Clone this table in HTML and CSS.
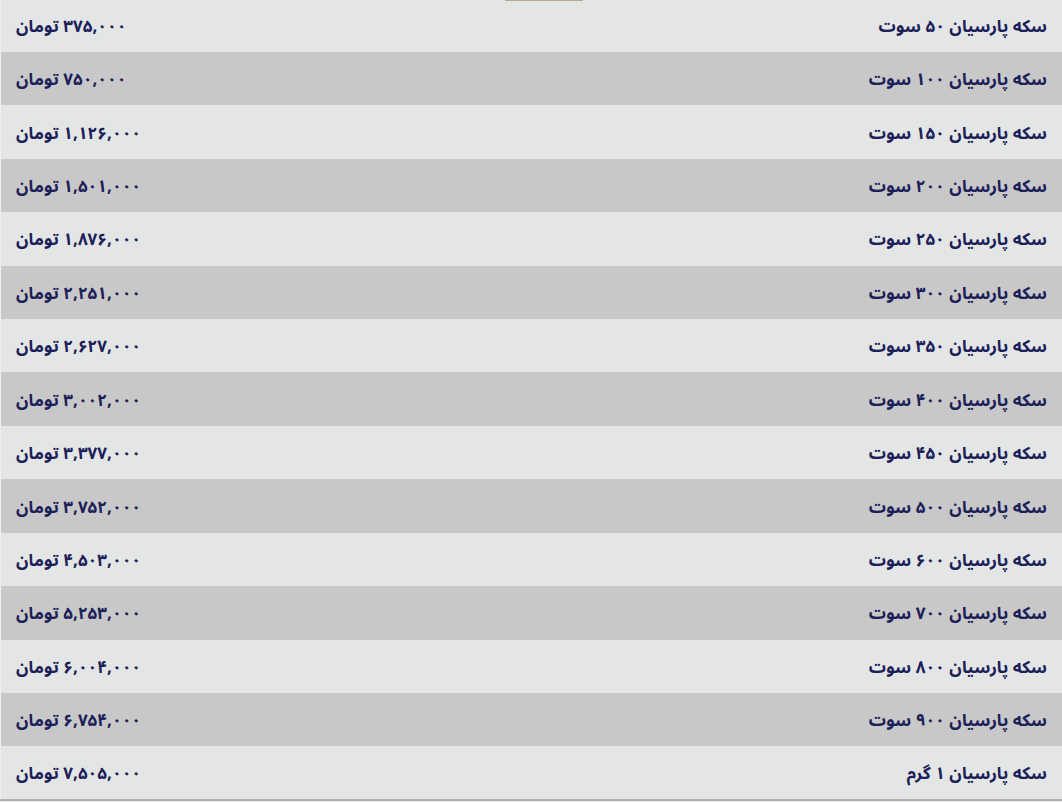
FILE: index.html
```html
<!DOCTYPE html>
<html lang="fa" dir="rtl">
<head>
<meta charset="utf-8">
<link rel="stylesheet" href="styles.css">
</head>
<body>
<div class="page">
  <div class="topline"></div>
  <table class="prices">
    <tbody>
      <tr><td class="name">سکه پارسیان ۵۰ سوت</td><td class="price">۳۷۵,۰۰۰ تومان</td></tr>
      <tr><td class="name">سکه پارسیان ۱۰۰ سوت</td><td class="price">۷۵۰,۰۰۰ تومان</td></tr>
      <tr><td class="name">سکه پارسیان ۱۵۰ سوت</td><td class="price">۱,۱۲۶,۰۰۰ تومان</td></tr>
      <tr><td class="name">سکه پارسیان ۲۰۰ سوت</td><td class="price">۱,۵۰۱,۰۰۰ تومان</td></tr>
      <tr><td class="name">سکه پارسیان ۲۵۰ سوت</td><td class="price">۱,۸۷۶,۰۰۰ تومان</td></tr>
      <tr><td class="name">سکه پارسیان ۳۰۰ سوت</td><td class="price">۲,۲۵۱,۰۰۰ تومان</td></tr>
      <tr><td class="name">سکه پارسیان ۳۵۰ سوت</td><td class="price">۲,۶۲۷,۰۰۰ تومان</td></tr>
      <tr><td class="name">سکه پارسیان ۴۰۰ سوت</td><td class="price">۳,۰۰۲,۰۰۰ تومان</td></tr>
      <tr><td class="name">سکه پارسیان ۴۵۰ سوت</td><td class="price">۳,۳۷۷,۰۰۰ تومان</td></tr>
      <tr><td class="name">سکه پارسیان ۵۰۰ سوت</td><td class="price">۳,۷۵۲,۰۰۰ تومان</td></tr>
      <tr><td class="name">سکه پارسیان ۶۰۰ سوت</td><td class="price">۴,۵۰۳,۰۰۰ تومان</td></tr>
      <tr><td class="name">سکه پارسیان ۷۰۰ سوت</td><td class="price">۵,۲۵۳,۰۰۰ تومان</td></tr>
      <tr><td class="name">سکه پارسیان ۸۰۰ سوت</td><td class="price">۶,۰۰۴,۰۰۰ تومان</td></tr>
      <tr><td class="name">سکه پارسیان ۹۰۰ سوت</td><td class="price">۶,۷۵۴,۰۰۰ تومان</td></tr>
      <tr><td class="name">سکه پارسیان ۱ گرم</td><td class="price">۷,۵۰۵,۰۰۰ تومان</td></tr>
    </tbody>
  </table>
</div>
</body>
</html>
```

FILE: styles.css
```css
html, body {
  margin: 0;
  padding: 0;
  background: #e4e6e6;
  overflow: hidden;
}
.page {
  position: relative;
  width: 1062px;
  height: 802px;
  overflow: hidden;
}
.topline {
  position: absolute;
  top: 0;
  left: 505px;
  width: 78px;
  height: 1px;
  background: #b7a98a;
}
.prices {
  width: 1062px;
  border-collapse: collapse;
  margin-top: -1.5px;
  font-family: "Noto Sans Arabic", "Vazirmatn", "Noto Naskh Arabic", "DejaVu Sans", sans-serif;
  font-weight: 700;
  font-size: 17px;
  color: #1b2059;
  border-bottom: 2px solid #b4b4b4;
  border-left: 1px solid #eef0f0;
}
.prices tr {
  height: 53.43px;
}
.prices tr:nth-child(odd) {
  background: #e4e6e6;
}
.prices tr:nth-child(even) {
  background: #c8c8c8;
}
.prices td {
  padding: 3px 15px 0;
  vertical-align: middle;
}
.prices td.name {
  text-align: right;
}
.prices td.price {
  text-align: left;
}
```
